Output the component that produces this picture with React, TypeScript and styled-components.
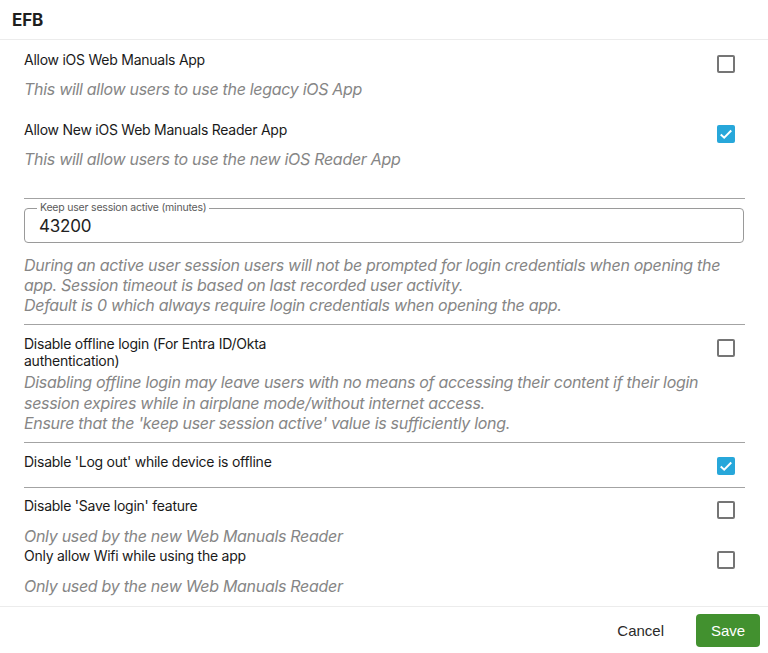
import React, { useState } from "react";
import styled, { createGlobalStyle } from "styled-components";

const Global = createGlobalStyle`
  html, body { margin: 0; padding: 0; background: #fff; }
  body { font-family: "Inter", "Open Sans", sans-serif; color: #1c1c1c; }
  * { box-sizing: border-box; }
`;

const Dialog = styled.div`
  display: flex;
  flex-direction: column;
  height: 653px;
  width: 768px;
  overflow: hidden;
`;

const Header = styled.header`
  height: 40px;
  padding: 0 12px;
  display: flex;
  align-items: center;
  border-bottom: 1px solid #ececec;
  font-weight: 700;
  font-size: 17px;
  letter-spacing: -0.2px;
  color: #1e1e1e;
`;

const Content = styled.main`
  flex: 1;
  padding: 0 23px 0 24px;
  overflow: hidden;
`;

const Block = styled.section<{ $top: number; $bottom?: number }>`
  margin-top: ${(p) => p.$top}px;
  margin-bottom: ${(p) => p.$bottom ?? 0}px;
`;

const SettingRow = styled.div`
  display: flex;
  justify-content: space-between;
  align-items: flex-start;
`;

const Label = styled.div<{ $narrow?: boolean }>`
  font-size: 14px;
  line-height: 17px;
  padding-top: 1px;
  letter-spacing: -0.25px;
  color: #1a1a1a;
  max-width: ${(p) => (p.$narrow ? "265px" : "none")};
`;

const CheckBoxSlot = styled.div`
  width: 28px;
  height: 28px;
  margin-right: 5px;
  display: flex;
  align-items: center;
  justify-content: center;
  flex-shrink: 0;
`;

const Box = styled.button<{ $checked: boolean }>`
  width: 18px;
  height: 18px;
  padding: 0;
  border-radius: 2px;
  border: ${(p) => (p.$checked ? "none" : "2px solid #757575")};
  background: ${(p) => (p.$checked ? "#27a7da" : "#fff")};
  display: flex;
  align-items: center;
  justify-content: center;
  cursor: pointer;
`;

const Desc = styled.p<{ $gap?: number; $lh?: number }>`
  margin: ${(p) => p.$gap ?? 1}px 0 0 0;
  font-size: 16px;
  line-height: ${(p) => p.$lh ?? 20}px;
  font-style: italic;
  color: #868686;
  letter-spacing: -0.3px;
`;

const Divider = styled.hr<{ $top: number }>`
  border: none;
  border-top: 1px solid #a3a3a3;
  margin: ${(p) => p.$top}px 0 0 0;
  height: 0;
`;

const Field = styled.fieldset`
  margin: 4px 1px 0 0;
  height: 40px;
  border: 1px solid #9a9a9a;
  border-radius: 4px;
  padding: 0 15px;
  display: flex;
  align-items: center;
`;

const Legend = styled.legend`
  font-size: 10.5px;
  color: #5a5a5a;
  padding: 0 3px;
  margin-left: -3px;
  line-height: 10px;
  letter-spacing: -0.2px;
`;

const Input = styled.input`
  border: none;
  outline: none;
  font-family: inherit;
  font-size: 17px;
  color: #222;
  padding: 0;
  margin-top: -4px;
  margin-left: -1px;
  width: 100%;
  letter-spacing: -0.2px;
  background: transparent;
`;

const Footer = styled.footer`
  height: 47px;
  border-top: 1px solid #ececec;
  display: flex;
  align-items: center;
  justify-content: flex-end;
  gap: 16px;
  padding: 0 8px 0 0;
`;

const TextButton = styled.button`
  font-family: "Liberation Sans", Arial, sans-serif;
  font-size: 15px;
  color: #2a2a2a;
  background: none;
  border: none;
  height: 33px;
  padding: 0 16px;
  cursor: pointer;
`;

const PrimaryButton = styled.button`
  font-family: "Liberation Sans", Arial, sans-serif;
  font-size: 15px;
  color: #fff;
  background: #42912f;
  border: none;
  border-radius: 4px;
  height: 33px;
  width: 64px;
  cursor: pointer;
`;

function Check({ checked, onToggle }: { checked: boolean; onToggle: () => void }) {
  return (
    <CheckBoxSlot>
      <Box $checked={checked} onClick={onToggle} aria-pressed={checked}>
        {checked && (
          <svg width="18" height="18" viewBox="0 0 24 24">
            <path d="M5 12.6 L9.6 17 L19 7.4" fill="none" stroke="#fff" strokeWidth="2.6" />
          </svg>
        )}
      </Box>
    </CheckBoxSlot>
  );
}

export default function App() {
  const [vals, setVals] = useState<Record<string, boolean>>({
    legacy: false,
    reader: true,
    offline: false,
    logout: true,
    save: false,
    wifi: false,
  });
  const t = (k: string) => () => setVals((v) => ({ ...v, [k]: !v[k] }));

  return (
    <Dialog>
      <Global />
      <Header>EFB</Header>
      <Content>
        <Block $top={10}>
          <SettingRow>
            <Label>Allow iOS Web Manuals App</Label>
            <Check checked={vals.legacy} onToggle={t("legacy")} />
          </SettingRow>
          <Desc>This will allow users to use the legacy iOS App</Desc>
        </Block>
        <Block $top={21}>
          <SettingRow>
            <Label>Allow New iOS Web Manuals Reader App</Label>
            <Check checked={vals.reader} onToggle={t("reader")} />
          </SettingRow>
          <Desc>This will allow users to use the new iOS Reader App</Desc>
        </Block>
        <Divider $top={29} />
        <Field>
          <Legend>Keep user session active (minutes)</Legend>
          <Input defaultValue="43200" />
        </Field>
        <Desc $gap={12}>
          During an active user session users will not be prompted for login credentials when opening the
          app. Session timeout is based on last recorded user activity.
          <br />
          Default is 0 which always require login credentials when opening the app.
        </Desc>
        <Divider $top={9} />
        <Block $top={9}>
          <SettingRow>
            <Label $narrow>Disable offline login (For Entra ID/Okta authentication)</Label>
            <Check checked={vals.offline} onToggle={t("offline")} />
          </SettingRow>
          <Desc $gap={3} $lh={20.5}>
            Disabling offline login may leave users with no means of accessing their content if their login
            session expires while in airplane mode/without internet access.
            <br />
            Ensure that the 'keep user session active' value is sufficiently long.
          </Desc>
        </Block>
        <Divider $top={8} />
        <Block $top={9}>
          <SettingRow>
            <Label>Disable 'Log out' while device is offline</Label>
            <Check checked={vals.logout} onToggle={t("logout")} />
          </SettingRow>
        </Block>
        <Divider $top={7} />
        <Block $top={8}>
          <SettingRow>
            <Label>Disable 'Save login' feature</Label>
            <Check checked={vals.save} onToggle={t("save")} />
          </SettingRow>
          <Desc $gap={2}>Only used by the new Web Manuals Reader</Desc>
        </Block>
        <Block $top={0}>
          <SettingRow>
            <Label>Only allow Wifi while using the app</Label>
            <Check checked={vals.wifi} onToggle={t("wifi")} />
          </SettingRow>
          <Desc $gap={2}>Only used by the new Web Manuals Reader</Desc>
        </Block>
      </Content>
      <Footer>
        <TextButton>Cancel</TextButton>
        <PrimaryButton>Save</PrimaryButton>
      </Footer>
    </Dialog>
  );
}
